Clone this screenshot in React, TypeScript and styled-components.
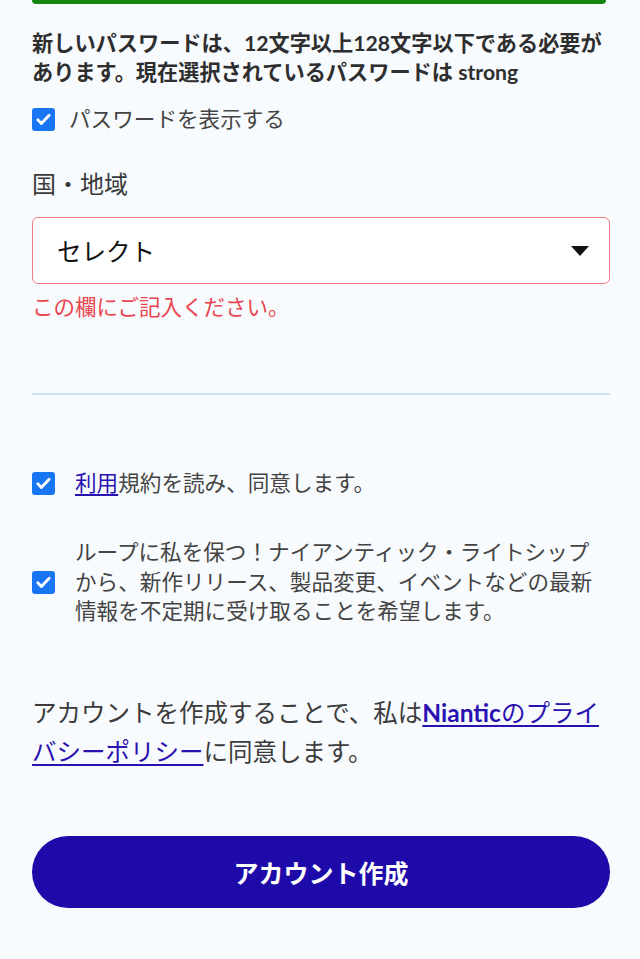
import React from 'react';
import styled, { createGlobalStyle } from 'styled-components';

const GlobalStyle = createGlobalStyle`
    html, body {
        margin: 0;
        padding: 0;
        background: #f8fbfe;
    }
    body {
        font-family: Lato, "Noto Sans CJK JP", "Noto Sans", sans-serif;
        color: #3a3a3a;
    }
`;

const Page = styled.div`
    padding: 0 30px 40px 32px;
    display: flex;
    flex-direction: column;
`;

const StrengthBar = styled.div`
    width: 574px;
    height: 4px;
    background: #15870f;
    border-radius: 0 0 4px 4px;
`;

const Hint = styled.p`
    margin: 25px 0 0;
    font-size: 21.2px;
    line-height: 29px;
    font-weight: 700;
    color: #2e2e2e;
`;

const CheckRow = styled.label<{ $top: number; $lh?: number; $gap?: number }>`
    display: flex;
    align-items: center;
    gap: ${(p) => p.$gap ?? 20}px;
    margin-top: ${(p) => p.$top}px;
    font-size: 21.6px;
    line-height: ${(p) => p.$lh ?? 30}px;
    color: #444;
`;

const Box = styled.span`
    flex: none;
    width: 23px;
    height: 23px;
    border-radius: 3px;
    background: #1976f2;
    display: flex;
    align-items: center;
    justify-content: center;
`;

const Label = styled.div`
    margin-top: 35px;
    font-size: 24px;
    line-height: 30px;
    color: #3a3a3a;
`;

const Select = styled.div`
    margin-top: 18px;
    height: 67px;
    box-sizing: border-box;
    border: 1.5px solid #ee7c86;
    border-radius: 6px;
    background: #fff;
    display: flex;
    align-items: center;
    justify-content: space-between;
    padding: 0 20px 0 24px;
    font-size: 24.5px;
    color: #111;
`;

const ErrorText = styled.div`
    margin-top: 9px;
    font-size: 21.5px;
    line-height: 28px;
    color: #e8464f;
`;

const Divider = styled.hr`
    margin: 72px 0 0;
    border: none;
    height: 2px;
    background: #c8e3f7;
`;

const Link = styled.a`
    color: #2a12b0;
    text-decoration: underline;
    text-underline-offset: 3px;
`;

const Brand = styled.span`
    font-weight: 700;
`;

const Policy = styled.p`
    margin: 66px 0 0;
    font-size: 24.5px;
    line-height: 39px;
    color: #3c3c3c;
`;

const SubmitButton = styled.button`
    margin-top: 65px;
    height: 72px;
    border: none;
    border-radius: 36px;
    background: #1e0aa8;
    color: #fff;
    font-family: inherit;
    font-size: 25px;
    font-weight: 700;
    cursor: pointer;
`;

const Check = () => (
    <Box>
        <svg width="17" height="17" viewBox="0 0 24 24" fill="none">
            <path d="M4 12.5l5 5L20 6" stroke="#fff" strokeWidth="4" strokeLinecap="round" strokeLinejoin="round" />
        </svg>
    </Box>
);

export default function App() {
    return (
        <Page>
            <GlobalStyle />
            <StrengthBar />
            <Hint>
                新しいパスワードは、12文字以上128文字以下である必要があります。現在選択されているパスワードは strong
            </Hint>

            <CheckRow $top={17} $gap={14}>
                <Check />
                <span>パスワードを表示する</span>
            </CheckRow>

            <Label>国・地域</Label>
            <Select>
                <span>セレクト</span>
                <svg width="18" height="10" viewBox="0 0 18 10">
                    <path d="M0 0h18L9 10z" fill="#111" />
                </svg>
            </Select>
            <ErrorText>この欄にご記入ください。</ErrorText>

            <Divider />

            <CheckRow $top={73}>
                <Check />
                <span>
                    <Link href="#">利用</Link>規約を読み、同意します。
                </span>
            </CheckRow>

            <CheckRow $top={40} $lh={29.5}>
                <Check />
                <span>
                    ループに私を保つ！ナイアンティック・ライトシップから、新作リリース、製品変更、イベントなどの最新情報を不定期に受け取ることを希望します。
                </span>
            </CheckRow>

            <Policy>
                アカウントを作成することで、私は
                <Link href="#">
                    <Brand>Niantic</Brand>のプライバシーポリシー
                </Link>
                に同意します。
            </Policy>

            <SubmitButton>アカウント作成</SubmitButton>
        </Page>
    );
}
